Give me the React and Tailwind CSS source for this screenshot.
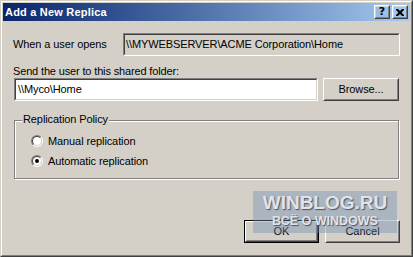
import React from "react";

function Raised({ className = "", children }) {
  return (
    <div className={"border border-t-white border-l-white border-r-[#404040] border-b-[#404040] " + className}>
      <div className="h-full w-full border border-t-[#d4d0c8] border-l-[#d4d0c8] border-r-[#808080] border-b-[#808080] flex items-center justify-center">
        {children}
      </div>
    </div>
  );
}

function Sunken({ className = "", innerClass = "", children }) {
  return (
    <div className={"border border-t-[#808080] border-l-[#808080] border-r-white border-b-white " + className}>
      <div className={"h-full w-full border border-t-[#404040] border-l-[#404040] border-r-[#d4d0c8] border-b-[#d4d0c8] flex items-center " + innerClass}>
        {children}
      </div>
    </div>
  );
}

function Radio({ checked }) {
  return (
    <div className="w-[12px] h-[12px] rounded-full border border-t-[#808080] border-l-[#808080] border-r-white border-b-white">
      <div className="w-full h-full rounded-full border border-t-[#404040] border-l-[#404040] border-r-[#d4d0c8] border-b-[#d4d0c8] bg-white flex items-center justify-center">
        {checked && <div className="w-[4px] h-[4px] rounded-full bg-black" />}
      </div>
    </div>
  );
}

export default function App() {
  return (
    <div className="w-[413px] h-[257px] font-['Liberation_Sans',Arial,sans-serif] text-[11px] leading-[13px] text-black">
      <div className="w-full h-full border border-t-[#d4d0c8] border-l-[#d4d0c8] border-r-[#404040] border-b-[#404040]">
        <div className="relative w-full h-full border border-t-white border-l-white border-r-[#808080] border-b-[#808080] bg-[#d4d0c8] p-[1px] flex flex-col">
          {/* title bar */}
          <div className="h-[18px] shrink-0 bg-gradient-to-r from-[#0a246a] to-[#a6caf0] flex items-center justify-between pl-[2px] pr-[2px]">
            <span className="text-white font-bold tracking-[0.2px] leading-[18px]">Add a New Replica</span>
            <div className="flex gap-[2px]">
              <Raised className="w-[16px] h-[14px]">
                <span className="font-bold text-[11px] leading-[10px] font-['DejaVu_Sans',sans-serif]">?</span>
              </Raised>
              <Raised className="w-[16px] h-[14px]">
                <svg width="8" height="7" viewBox="0 0 8 7" className="block">
                  <path d="M0 0h2l2 2 2-2h2v1l-2.5 2.5L8 6v1H6L4 5 2 7H0V6l2.5-2.5L0 1z" fill="#000" />
                </svg>
              </Raised>
            </div>
          </div>

          {/* body */}
          <div className="flex-1 pl-[10px] pr-[10px] flex flex-col">
            <div className="mt-[12px] flex items-center">
              <span className="w-[110px] tracking-[-0.1px]">When a user opens</span>
              <Sunken className="flex-1 h-[23px]" innerClass="pl-[1px] bg-[#d4d0c8]">
                <span className="tracking-[-0.1px]">\\MYWEBSERVER\ACME Corporation\Home</span>
              </Sunken>
            </div>

            <div className="mt-[9px] tracking-[-0.15px]">Send the user to this shared folder:</div>

            <div className="flex items-center">
              <Sunken className="ml-[1px] w-[304px] h-[23px]" innerClass="pl-[2px] bg-white">
                <span className="tracking-[-0.1px]">\\Myco\Home</span>
              </Sunken>
              <Raised className="ml-[5px] w-[76px] h-[23px]">
                <span className="tracking-[-0.1px]">Browse...</span>
              </Raised>
            </div>

            <div className="relative mt-[19px] ml-[1px] w-[385px] h-[59px] border border-[#808080] shadow-[inset_1px_1px_0_#fff,1px_1px_0_#fff] pl-[16px] pt-[10px] flex flex-col">
              <span className="absolute left-[7px] top-[-8px] px-[1px] bg-[#d4d0c8] tracking-[-0.1px]">Replication Policy</span>
              <div className="h-[20px] flex items-center gap-[5px]">
                <Radio checked={false} />
                <span className="tracking-[-0.1px]">Manual replication</span>
              </div>
              <div className="h-[20px] flex items-center gap-[5px]">
                <Radio checked={true} />
                <span className="tracking-[-0.1px]">Automatic replication</span>
              </div>
            </div>

            <div className="mt-[41px] flex justify-end gap-[6px]">
              <div className="w-[75px] h-[23px] border border-black">
                <Raised className="w-full h-full">
                  <span>OK</span>
                </Raised>
              </div>
              <Raised className="w-[75px] h-[23px]">
                <span>Cancel</span>
              </Raised>
            </div>
          </div>

          {/* watermark overlay */}
          <div className="absolute left-[251px] top-[189px] w-[144px] h-[42px] bg-[#6e8cb4]/40 flex flex-col items-center pt-[2px] font-bold text-[#e0e4ea] [text-shadow:1px_1px_1px_#4a5562]">
            <span className="text-[19px] leading-[19px]">WINBLOG.RU</span>
            <span className="mt-[3px] text-[12.5px] leading-[13px]">ВСЁ О WINDOWS</span>
          </div>
        </div>
      </div>
    </div>
  );
}
